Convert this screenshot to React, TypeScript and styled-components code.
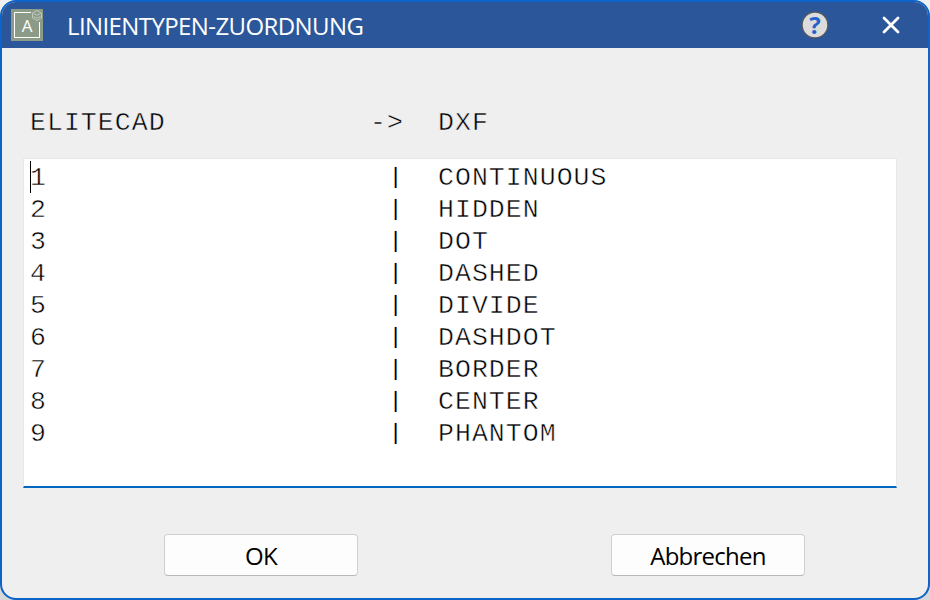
import React from "react";
import styled, { createGlobalStyle } from "styled-components";

const GlobalStyle = createGlobalStyle`
  * { box-sizing: border-box; }
  html, body { margin: 0; padding: 0; }
  body {
    width: 930px; height: 600px; overflow: hidden;
    background: linear-gradient(#efefef, #d8d8d8);
  }
`;

const Dialog = styled.main`
  display: flex;
  flex-direction: column;
  width: 930px;
  height: 600px;
  overflow: hidden;
  border: 2px solid #0c63c8;
  border-radius: 16px;
  background: #efefef;
  color: #000;
  font-family: "Open Sans", sans-serif;
`;

const TitleBar = styled.header`
  display: flex;
  align-items: center;
  height: 46px;
  flex: none;
  padding: 0 25px 0 9px;
  background: #2b579a;
`;

const Title = styled.h1`
  flex: 1;
  margin: 0 0 0 24px;
  padding-top: 2px;
  color: #fff;
  font-size: 24px;
  line-height: 32px;
  font-weight: 400;
  letter-spacing: -0.6px;
  white-space: nowrap;
`;

const IconButton = styled.button<{ $gap?: number }>`
  display: flex;
  padding: 0;
  margin-left: ${(p) => p.$gap ?? 0}px;
  border: 0;
  background: none;
`;

const MonoLine = styled.div<{ $paper?: string }>`
  display: grid;
  grid-template-columns: 340px 68px 1fr;
  height: 32px;
  font-family: "Liberation Mono", monospace;
  font-size: 26.5px;
  line-height: 32px;
  letter-spacing: 1.05px;
  white-space: pre;
  -webkit-text-stroke: 0.5px ${(p) => p.$paper ?? "#fff"};
`;

const Heading = styled(MonoLine)`
  flex: none;
  margin: 59px 0 0 28px;
`;

const ListBox = styled.section`
  flex: none;
  width: 874px;
  height: 330px;
  margin: 19px 0 0 21px;
  padding: 3px 0 0 6px;
  border: 1px solid #e8e8e8;
  border-bottom: 2px solid #0067c0;
  background: #fff;
`;

const Separator = styled.span`
  padding-left: 19px;
  font-size: 22px;
  -webkit-text-stroke: 0;
`;

const Caret = styled.span`
  display: inline-block;
  width: 1px;
  height: 32px;
  margin: -1px -1px 0 0;
  vertical-align: top;
  background: #000;
`;

const Actions = styled.footer`
  display: flex;
  justify-content: space-between;
  margin: 46px 123px 0 162px;
`;

const Button = styled.button`
  width: 194px;
  height: 42px;
  padding: 2px 0 0;
  border: 1px solid #d0d0d0;
  border-bottom-color: #b9b9b9;
  border-radius: 4px;
  background: #fdfdfd;
  color: #000;
  font: 400 24px/36px "Open Sans", sans-serif;
  letter-spacing: -0.75px;
`;

const BadgeText = styled.text`
  font-family: "Open Sans", sans-serif;
  text-anchor: middle;
`;

const AppIcon = () => (
  <svg width="32" height="32" viewBox="0 0 32 32" fill="none">
    <path d="M0 0h32v32H0z" fill="#8c9b87" />
    <path d="M20 3.5H3.5v25h25V13" stroke="#fff" />
    <BadgeText x="16" y="22.6" fontSize="17" fill="#fff">A</BadgeText>
    <path
      d="M26 1.5l4.5 2.5v5L26 11.5 21.5 9V4L26 1.5zM22.5 4.5L26 6.3l3.5-1.8M22.5 7.5L26 9.2l3.5-1.7"
      stroke="#c0c8bd"
    />
  </svg>
);

const HelpIcon = () => (
  <svg width="28" height="28" viewBox="0 0 28 28" overflow="visible">
    <circle cx="14" cy="14" r="12.9" fill="#dcdcdc" stroke="#595959" strokeWidth="1.3" />
    <BadgeText x="14" y="22.5" fontSize="24" fontWeight="700" fill="#2563c9">?</BadgeText>
  </svg>
);

const CloseIcon = () => (
  <svg width="24" height="24" viewBox="0 0 24 24">
    <path d="M5 5l14 14M19 5L5 19" stroke="#fff" strokeWidth="2.8" strokeLinecap="round" />
  </svg>
);

const lineTypes = [
  "CONTINUOUS", "HIDDEN", "DOT", "DASHED", "DIVIDE",
  "DASHDOT", "BORDER", "CENTER", "PHANTOM",
];

export default function App() {
  return (
    <>
      <GlobalStyle />
      <Dialog>
        <TitleBar>
          <AppIcon />
          <Title>LINIENTYPEN-ZUORDNUNG</Title>
          <IconButton aria-label="Hilfe"><HelpIcon /></IconButton>
          <IconButton aria-label="Schließen" $gap={50}><CloseIcon /></IconButton>
        </TitleBar>
        <Heading $paper="#efefef">
          <span>ELITECAD</span>
          <span>{"->"}</span>
          <span>DXF</span>
        </Heading>
        <ListBox>
          {lineTypes.map((name, i) => (
            <MonoLine key={name}>
              <span>{i === 0 && <Caret />}{i + 1}</span>
              <Separator>|</Separator>
              <span>{name}</span>
            </MonoLine>
          ))}
        </ListBox>
        <Actions>
          <Button>OK</Button>
          <Button>Abbrechen</Button>
        </Actions>
      </Dialog>
    </>
  );
}
